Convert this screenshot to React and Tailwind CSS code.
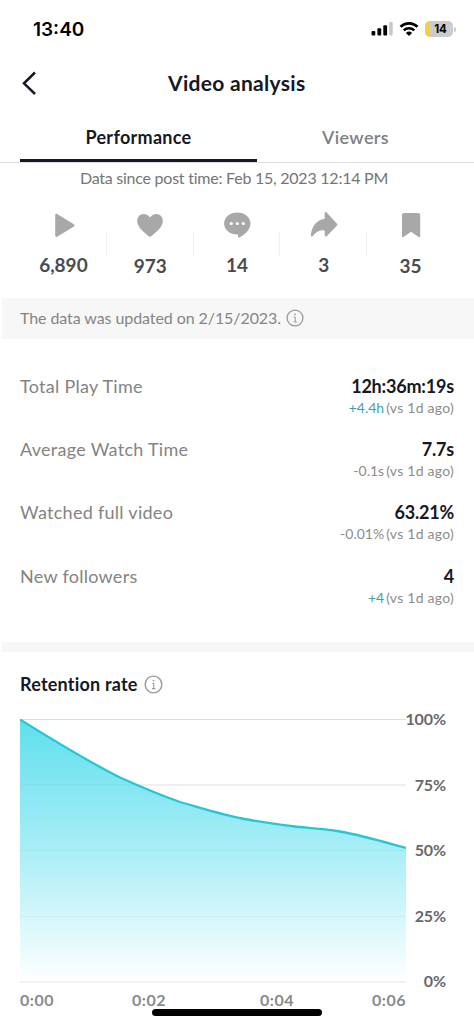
import React, { useState } from 'react';

const stats = [
  { icon: 'play', value: '6,890' },
  { icon: 'heart', value: '973' },
  { icon: 'comment', value: '14' },
  { icon: 'share', value: '3' },
  { icon: 'bookmark', value: '35' },
];

const metrics = [
  { label: 'Total Play Time', value: '12h:36m:19s', change: '+4.4h', up: true },
  { label: 'Average Watch Time', value: '7.7s', change: '-0.1s', up: false },
  { label: 'Watched full video', value: '63.21%', change: '-0.01%', up: false },
  { label: 'New followers', value: '4', change: '+4', up: true },
];

const curve =
  'M0 0.5 C32 20.5 68 42.5 100 58.5 C120 67.5 140 76 160 83 C180 88.5 200 95 222 99.5 C240 103 258 105.5 275 107.5 C290 109 302 109.5 320 112.5 C345 117 366 123.5 386 129';

function StatIcon({ name }) {
  return (
    <svg width="28" height="28" viewBox="0 0 28 28" fill="#a8a8ab">
      {name === 'play' && (
        <path d="M6.2 3.1c0-1.1 1-1.6 1.9-1.1l16.8 10.3c.9.6.9 1.6 0 2.2L8.1 24.7c-.9.6-1.9 0-1.9-1.1Z" />
      )}
      {name === 'heart' && (
        <path d="M7.7 2c2.7 0 4.8 1.3 6.3 3.4C15.5 3.3 17.6 2 20.3 2c3.8 0 6.5 2.9 6.5 6.8 0 6.3-6.2 11-11.5 15.5-.8.6-1.8.6-2.6 0C7.4 19.8 1.2 15.1 1.2 8.8 1.2 4.9 3.9 2 7.7 2Z" />
      )}
      {name === 'comment' && (
        <>
          <path d="M14.3 .5c7.3 0 13.2 4.8 13.2 11 0 6-5.3 11-11.2 14-.7.3-1.3 0-1.3-.8v-2.2h-.7c-7.300 0-13.200-4.800-13.200-11S7 .5 14.3.5Z" />
          <circle cx="8.3" cy="11.5" r="1.6" fill="white" />
          <circle cx="14.3" cy="11.5" r="1.6" fill="white" />
          <circle cx="20.3" cy="11.5" r="1.6" fill="white" />
        </>
      )}
      {name === 'share' && (
        <path d="M14.7 1.3c0-1.2 1.2-1.7 2-.9L27 11.7c.5.6.5 1.2 0 1.8L16.7 24.2c-.8.8-2 .4-2-.8v-5c-5.2-.4-8.8 1.5-11.9 5.6-.6.7-1.9.4-1.9-.6C1.5 14.5 6.5 7.9 14.7 6.8Z" />
      )}
      {name === 'bookmark' && (
        <path d="M7.2 1h13.8c1.3 0 2.2.9 2.2 2.2v21c0 .8-.8 1.2-1.5.8L14.1 19.8l-7.6 5.2c-.7.4-1.5 0-1.5-.8V3.2C5 1.9 5.9 1 7.2 1Z" />
      )}
    </svg>
  );
}

function InfoIcon({ size }) {
  return (
    <svg width={size} height={size} viewBox="0 0 18 18" fill="none" stroke="#98989b" strokeWidth="1.3">
      <circle cx="9" cy="9" r="7.9" />
      <path d="M7.8 8h1.4v4.8M7.6 12.9h3.2" strokeWidth="1" />
      <circle cx="9" cy="5.3" r="0.9" fill="#98989b" stroke="none" />
    </svg>
  );
}

function StatusBar() {
  return (
    <div className="flex h-[58px] items-center justify-between pl-[33px] pr-[18px] font-['Inter',sans-serif] text-black">
      <span className="text-[19px] font-semibold leading-none">13:40</span>
      <div className="flex items-center">
        <svg width="22" height="16" viewBox="0 0 22 16">
          <rect x="0.5" y="10" width="3.8" height="4.5" rx="1" />
          <rect x="6.4" y="7.3" width="3.8" height="7.2" rx="1" />
          <rect x="12.3" y="4.3" width="3.8" height="10.2" rx="1" />
          <rect x="18.2" y="1" width="3.5" height="13.5" rx="1" fill="#c8c8c9" />
        </svg>
        <svg width="20" height="16" viewBox="0 0 20 16" fill="none" stroke="black" className="ml-[6px]">
          <path d="M1.5 5.8a12.2 12.2 0 0 1 17 0" strokeWidth="2.7" />
          <path d="M4.7 9.3a7.7 7.7 0 0 1 10.6 0" strokeWidth="2.5" />
          <path d="M6.9 11.9a4.7 4.7 0 0 1 6.2 0L10 15Z" fill="black" stroke="none" />
        </svg>
        <div className="ml-[6px] flex h-4 w-[28px] items-center justify-center overflow-hidden rounded-[5px] border-l-4 border-[#f5cd3d] bg-[#cbcbcb] pt-px pr-px text-[11.5px] font-bold leading-none">
          14
        </div>
        <div className="ml-px h-[5px] w-[2px] rounded-r-full bg-[#cbcbcb]" />
      </div>
    </div>
  );
}

function Metric({ label, value, change, up }) {
  return (
    <div className="flex h-[63.2px] justify-between">
      <span className="text-[18px] leading-[22px] tracking-[0.28px] text-[#838383]">{label}</span>
      <div className="text-right">
        <div className="text-[18px] font-bold leading-[22px] tracking-[-0.2px] text-[#161823]">{value}</div>
        <div className="text-[14px] leading-[21px] text-[#8c8c8c]">
          <span className={up ? 'text-[#3f9fa9]' : ''}>{change}</span>
          <span className="ml-[2px] tracking-[0.25px]">(vs 1d ago)</span>
        </div>
      </div>
    </div>
  );
}

function RetentionChart() {
  return (
    <div className="ml-5 mt-[24px]">
      <div className="flex">
        <svg width="386" height="264" viewBox="0 0 386 264">
          <defs>
            <linearGradient id="area" x1="0" y1="0" x2="0" y2="1">
              <stop offset="0" stopColor="#5fdfed" />
              <stop offset="0.5" stopColor="#a9eef6" />
              <stop offset="0.8" stopColor="#dcf8fc" />
              <stop offset="1" stopColor="#ffffff" />
            </linearGradient>
          </defs>
          <path d={curve + ' V263 H0 Z'} fill="url(#area)" />
          {[0.5, 66, 131.5, 197.5, 263].map((y) => (
            <path key={y} d={`M0 ${y}H386`} stroke="#000000" strokeOpacity="0.13" />
          ))}
          <path d={curve + ' V262.5 H0 Z'} fill="url(#area)" fillOpacity="0.7" />
          <path d={curve} fill="none" stroke="#27c5d6" strokeWidth="2.3" />
        </svg>
        <div className="-mb-[8px] -mt-[10px] flex w-[40px] flex-col items-end justify-between text-[16px] font-bold leading-[20px] tracking-[-0.1px] text-[#68686b]">
          <span>100%</span>
          <span>75%</span>
          <span>50%</span>
          <span>25%</span>
          <span>0%</span>
        </div>
      </div>
      <div className="mt-[7px] flex text-[16px] font-bold leading-[20px] tracking-[0.5px] text-[#89898b]">
        <span className="w-[112px]">0:00</span>
        <span className="w-[128px]">0:02</span>
        <span className="w-[112px]">0:04</span>
        <span>0:06</span>
      </div>
    </div>
  );
}

export default function App() {
  const [tab, setTab] = useState('Performance');

  return (
    <div className="relative h-[1026px] w-[474px] overflow-hidden bg-white font-['Lato',sans-serif] text-[#161823]">
      <StatusBar />

      <header className="flex h-[50px] items-center pl-[22px]">
        <button className="w-[14px]">
          <svg width="14" height="24" viewBox="0 0 14 24" fill="none" stroke="#161823" strokeWidth="2.5">
            <path d="M13 1.5 2 12.3 13 23" />
          </svg>
        </button>
        <h1 className="-mt-px ml-[132px] text-[21px] font-bold tracking-[0.3px]">Video analysis</h1>
      </header>

      <nav className="flex h-[55px] border-b border-[#dedee0] px-5">
        {['Performance', 'Viewers'].map((name) => (
          <button
            key={name}
            onClick={() => setTab(name)}
            className={
              name === tab
                ? 'w-[237px] border-b-[3px] border-[#161823] pt-[6px] text-[18px] font-bold leading-none tracking-[0.3px]'
                : 'w-[197px] border-b-[3px] border-transparent pt-[6px] text-[18px] font-semibold leading-none tracking-[0.4px] text-[#808084]'
            }
          >
            {name}
          </button>
        ))}
      </nav>

      <p className="h-[49px] pr-[6px] pt-[4px] text-center text-[16px] leading-[22px] tracking-[-0.24px] text-[#757575]">
        Data since post time: Feb 15, 2023 12:14 PM
      </p>

      <div className="flex px-5">
        {stats.map((s, i) => (
          <div key={s.icon} className="flex h-[86px] w-[86.8px] flex-col items-center">
            <div className="flex h-[40px] w-full justify-center">
              <StatIcon name={s.icon} />
            </div>
            <span
              className={
                i === 1 || i === 4
                  ? 'pt-px text-[19px] font-bold leading-[26px] text-[#4b4b4d]'
                  : 'pb-px text-[19px] font-bold leading-[26px] text-[#4b4b4d]'
              }
            >
              {s.value}
            </span>
            {i < 4 && <i className="-mt-[47px] ml-auto h-[24px] w-px bg-[#f2f2f2]" />}
          </div>
        ))}
      </div>

      <div className="ml-[2px] flex h-[41px] items-center bg-[#f7f7f7] pl-[18px] text-[16px] text-[#858585]">
        <span className="pb-px tracking-[-0.08px]">The data was updated on 2/15/2023.</span>
        <span className="ml-[5px] pb-px">
          <InfoIcon size={18} />
        </span>
      </div>

      <section className="h-[303px] pl-5 pr-[20px] pt-[36px]">
        {metrics.map((m) => (
          <Metric key={m.label} {...m} />
        ))}
      </section>

      <div className="ml-[2px] h-[10px] bg-[#f7f7f7]" />

      <div className="mt-[21px] flex h-[22px] items-center pl-5">
        <h2 className="text-[18px] font-bold tracking-[0.2px]">Retention rate</h2>
        <span className="ml-[6px] pt-px">
          <InfoIcon size={19} />
        </span>
      </div>

      <RetentionChart />

      <div className="absolute left-[152px] top-[1009px] h-[7px] w-[170px] rounded-full bg-black" />
    </div>
  );
}
